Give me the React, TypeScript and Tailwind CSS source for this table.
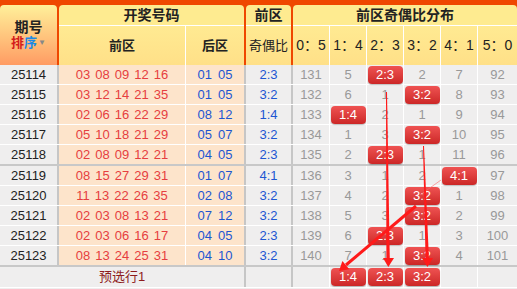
import React from 'react'

type Row = {
  id: string
  front: string[]
  back: string[]
  ratio: string
  miss: number[]
}

const rows: Row[] = [
  { id: '25114', front: ['03', '08', '09', '12', '16'], back: ['01', '05'], ratio: '2:3', miss: [131, 5, 0, 2, 7, 92] },
  { id: '25115', front: ['03', '12', '14', '21', '35'], back: ['01', '05'], ratio: '3:2', miss: [132, 6, 1, 0, 8, 93] },
  { id: '25116', front: ['02', '06', '16', '22', '29'], back: ['08', '12'], ratio: '1:4', miss: [133, 0, 2, 1, 9, 94] },
  { id: '25117', front: ['05', '10', '18', '21', '29'], back: ['05', '07'], ratio: '3:2', miss: [134, 1, 3, 0, 10, 95] },
  { id: '25118', front: ['02', '08', '09', '12', '21'], back: ['04', '05'], ratio: '2:3', miss: [135, 2, 0, 1, 11, 96] },
  { id: '25119', front: ['08', '15', '27', '29', '31'], back: ['01', '07'], ratio: '4:1', miss: [136, 3, 1, 2, 0, 97] },
  { id: '25120', front: ['11', '13', '22', '26', '35'], back: ['02', '08'], ratio: '3:2', miss: [137, 4, 2, 0, 1, 98] },
  { id: '25121', front: ['02', '03', '08', '13', '21'], back: ['07', '12'], ratio: '3:2', miss: [138, 5, 3, 0, 2, 99] },
  { id: '25122', front: ['02', '03', '06', '16', '17'], back: ['04', '05'], ratio: '2:3', miss: [139, 6, 0, 1, 3, 100] },
  { id: '25123', front: ['08', '13', '24', '25', '31'], back: ['04', '10'], ratio: '3:2', miss: [140, 7, 1, 0, 4, 101] },
]

const ratios = ['0：5', '1：4', '2：3', '3：2', '4：1', '5：0']
const ratioKeys = ['0:5', '1:4', '2:3', '3:2', '4:1', '5:0']
const picked = ['1:4', '2:3', '3:2']

const Badge = ({ text }: { text: string }) => (
  <div className="flex h-[18px] w-[35px] items-center justify-center rounded-[4px] bg-linear-to-b from-[#ef5252] to-[#cc2626] text-[13px] text-white shadow-[0_1px_1px_rgba(0,0,0,0.25)]">
    {text}
  </div>
)

const distCell = (i: number) =>
  i === 5 ? 'w-[39px]' : 'w-[37px] border-r border-r-white'

const App = () => {
  return (
    <div className="relative h-[289px] w-[517px] overflow-hidden bg-[#efeeee] font-['Liberation_Sans','Noto_Sans_CJK_SC',sans-serif] text-[13px]">
      {/* header */}
      <div className="flex bg-[#ef4700] pt-[5px]">
        <div className="mr-[2px] flex h-[60px] w-[57px] flex-col items-center justify-center rounded-t-[4px] bg-linear-to-b from-[#fff09a] to-[#ff9b63]">
          <div className="text-[14px] font-bold leading-[16px] text-[#222]">期号</div>
          <div className="flex items-center text-[13px] font-bold leading-[16px]">
            <span className="text-[#d41c1c]">排</span>
            <span className="text-[#1a8ae6]">序</span>
            <span className="ml-[1px] text-[8px] text-[#888]">▼</span>
          </div>
        </div>

        <div className="mr-[2px] flex w-[185px] flex-col overflow-hidden rounded-t-[4px]">
          <div className="flex h-[21px] items-center justify-center border-b border-b-white bg-[#feeb90] text-[14px] font-bold text-[#222]">
            开奖号码
          </div>
          <div className="flex h-[39px] bg-linear-to-b from-[#ffea92] to-[#ffe088] font-bold text-[#222]">
            <div className="flex w-[127px] items-center justify-center border-r border-r-white">前区</div>
            <div className="flex w-[58px] items-center justify-center">后区</div>
          </div>
        </div>

        <div className="mr-[2px] flex w-[45px] flex-col overflow-hidden rounded-t-[4px]">
          <div className="flex h-[21px] items-center justify-center border-b border-b-white bg-[#feeb90] text-[14px] font-bold text-[#222]">
            前区
          </div>
          <div className="flex h-[39px] items-center justify-center bg-linear-to-b from-[#ffea92] to-[#ffe088] text-[#222]">
            奇偶比
          </div>
        </div>

        <div className="flex w-[224px] flex-col overflow-hidden rounded-t-[4px]">
          <div className="flex h-[21px] items-center justify-center border-b border-b-white bg-[#feeb90] text-[14px] font-bold text-[#222]">
            前区奇偶比分布
          </div>
          <div className="flex h-[39px] bg-linear-to-b from-[#ffea92] to-[#ffe088] text-[14px] text-[#222]">
            {ratios.map((r, i) => (
              <div key={r} className={`flex items-center justify-center ${distCell(i)}`}>
                {r}
              </div>
            ))}
          </div>
        </div>
      </div>

      {/* body */}
      {rows.map((row, idx) => {
        const sep = idx === 4 || idx === 9
        const rowCls = sep ? 'h-[21px] border-b-2 border-b-[#c8c8c8]' : 'h-[20px] border-b border-b-white'
        return (
          <div key={row.id} className={`flex ${rowCls}`}>
            <div className="flex w-[59px] items-center justify-center border-r-2 border-r-[#c6c6c6] text-[#222]">
              {row.id}
            </div>
            <div className="flex w-[127px] items-center justify-center gap-[5px] border-r border-r-white bg-[#fde4cb] text-[#e63e40]">
              {row.front.map((n, i) => (
                <span key={i}>{n}</span>
              ))}
            </div>
            <div className="flex w-[60px] items-center justify-center gap-[6px] border-r-2 border-r-[#c6c6c6] bg-[#fde4cb] text-[#1d56d2]">
              {row.back.map((n, i) => (
                <span key={i}>{n}</span>
              ))}
            </div>
            <div className="flex w-[47px] items-center justify-center border-r-2 border-r-[#c6c6c6] text-[#1d56d2]">
              {row.ratio}
            </div>
            {row.miss.map((m, i) => (
              <div key={i} className={`flex items-center justify-center text-[#999] ${distCell(i)}`}>
                {ratioKeys[i] === row.ratio ? <Badge text={row.ratio} /> : m}
              </div>
            ))}
          </div>
        )
      })}

      {/* preselect row */}
      <div className="flex h-[21px] border-b border-b-white">
        <div className="flex w-[246px] items-center justify-center border-r-2 border-r-[#c6c6c6] text-[#8e1c1c]">
          预选行1
        </div>
        <div className="w-[47px] border-r-2 border-r-[#c6c6c6]" />
        {ratioKeys.map((k, i) => (
          <div key={k} className={`flex items-center justify-center ${distCell(i)}`}>
            {picked.includes(k) && <Badge text={k} />}
          </div>
        ))}
      </div>

      {/* trend arrows */}
      <svg className="pointer-events-none absolute left-0 top-0" width="517" height="289" viewBox="0 0 517 289">
        <line x1="441" y1="180" x2="420" y2="195" stroke="#ff6a6a" strokeWidth="1" opacity="0.6" />
        <polygon points="386,92 387,92 389.8,260 386.4,260" fill="#ff1a1a" />
        <polygon points="383,258 394,258 388.3,267" fill="#ff1a1a" />
        <polygon points="423,146 424,146 429,260 425.6,260" fill="#ff1a1a" />
        <polygon points="422,258 433,258 427.4,267" fill="#ff1a1a" />
        <line x1="416" y1="206" x2="346" y2="265" stroke="#ff1a1a" strokeWidth="3" />
        <polygon points="339,271 349.3,269.2 342.4,261" fill="#ff1a1a" />
      </svg>
    </div>
  )
}

export default App
